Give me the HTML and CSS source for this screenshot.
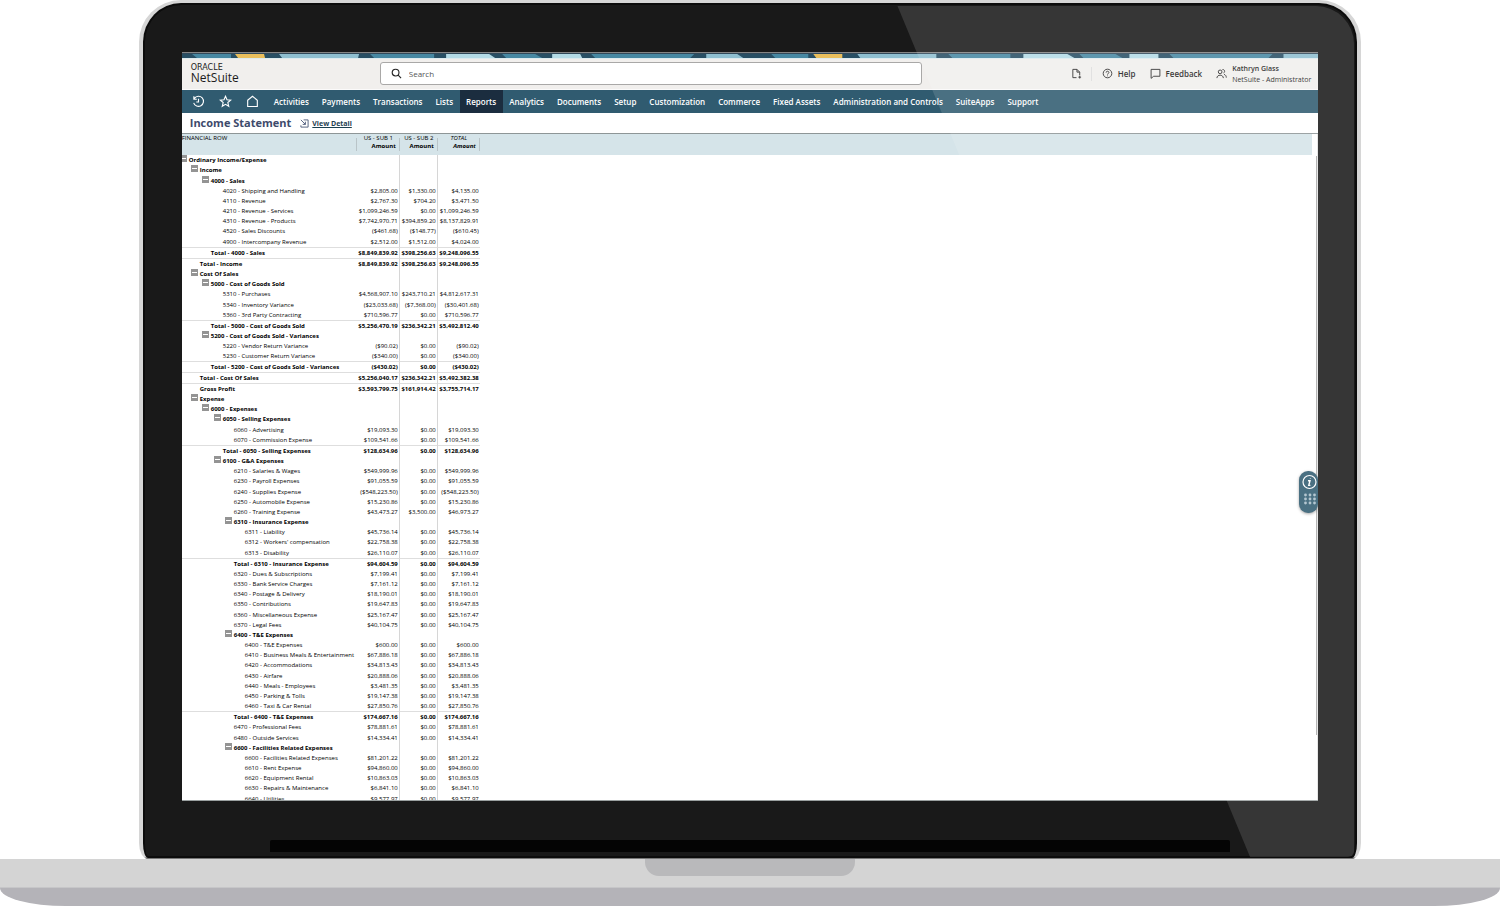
FILE: index.html
```html
<!DOCTYPE html>
<html lang="en">
  <head>
    <meta charset="UTF-8" />
    <meta name="viewport" content="width=device-width, initial-scale=1.0" />
    <title>Income Statement - NetSuite</title>
    <link rel="stylesheet" href="styles.css">
  </head>
  <body>
    <div class="lid">
      <div class="screen">
        <svg class="ribbon" viewBox="0 0 1136 5" preserveAspectRatio="none" aria-hidden="true">
          <rect width="1136" height="5" fill="#284f64" />
          <g fill="#4788a2">
            <path d="M10 0H49V5H15zM188 0H252V5H192zM320 0H353L360 5H324zM409 0H512L508 5H413zM589 0H626V5H593zM766 0H828V5H770zM897 0H933L940 5H901zM987 0H1090L1086 5H991z" />
          </g>
          <path fill="#eabf5c" d="M53 0H82L83 5H56zM631 0H660V5H634z" />
          <path fill="#8fbfd0" d="M97 0H177L176 5H100zM524 0H555L561 5H524zM675 0H754V5H678zM1101 0H1136V5H1101z" />
          <path fill="#b4dbe6" d="M264 0H307L313 5H264zM370 0H398L400 5H370zM841 0H885L892 5H841zM947 0H976V5H947z" />
        </svg>

        <header class="topbar">
          <a href="#" class="logo">
            <span class="logo-oracle">ORACLE</span>
            <span class="logo-netsuite">NetSuite</span>
          </a>
          <label class="search">
            <svg class="icon-search" viewBox="0 0 12 12"><circle cx="5" cy="5" r="3.7" /><path d="M7.8 7.8L11 11" /></svg>
            <input type="text" class="search-input" placeholder="Search" aria-label="Search" />
          </label>
          <div class="tools">
            <button class="tool-button tool-create" aria-label="Create new">
              <svg class="icon" viewBox="0 0 12 12"><path d="M6 10.5H2V1.5H6.5L9.5 4.5V8M6.5 1.5V4.5H9.5M8 10H11M9.5 8.5V11.5" /></svg>
            </button>
            <button class="tool-button tool-help">
              <svg class="icon" viewBox="0 0 12 12"><circle cx="6" cy="6" r="4.7" /><path d="M4.5 5C4.5 3 7.5 3 7.5 5C7.5 6 6 6 6 7.2M6 8.2V9" /></svg>
              Help
            </button>
            <button class="tool-button tool-feedback">
              <svg class="icon" viewBox="0 0 12 12"><path d="M1.2 1.5H10.8V9H4L1.2 11.3z" /></svg>
              Feedback
            </button>
            <button class="tool-button tool-user">
              <svg class="icon" viewBox="0 0 12 12"><circle cx="4.5" cy="4.2" r="2" /><path d="M1 11C1 6.8 8 6.8 8 11M7 1.8C9.6 1.2 10.2 4.6 8.3 5.4M8.8 7C10.4 7.4 11.2 8.6 11.2 10.5" /></svg>
              <span class="user-text">
                <span class="user-name">Kathryn Glass</span>
                <span class="user-role">NetSuite - Administrator</span>
              </span>
            </button>
          </div>
        </header>

        <nav class="menu">
          <div class="menu-icons">
            <a href="#" class="menu-icon" aria-label="Recent">
              <svg viewBox="0 0 14 14"><path d="M2.6 3.6A5.4 5.4 0 1 1 1.8 8.4M2 1.4V4.6H5.2M7 4V7.6H4.6" /></svg>
            </a>
            <a href="#" class="menu-icon" aria-label="Shortcuts">
              <svg viewBox="0 0 14 14"><path d="M7 1.4L8.6 5.2L12.6 5.5L9.5 8.1L10.5 12.2L7 10L3.5 12.2L4.5 8.1L1.4 5.5L5.4 5.2z" /></svg>
            </a>
            <a href="#" class="menu-icon" aria-label="Home">
              <svg viewBox="0 0 14 14"><path d="M1.8 5.6L7 1.4L12.2 5.6V12.4H1.8z" /></svg>
            </a>
          </div>
          <a href="#" class="menu-link">Activities</a>
          <a href="#" class="menu-link">Payments</a>
          <a href="#" class="menu-link">Transactions</a>
          <a href="#" class="menu-link">Lists</a>
          <a href="#" class="menu-link active-link">Reports</a>
          <a href="#" class="menu-link">Analytics</a>
          <a href="#" class="menu-link">Documents</a>
          <a href="#" class="menu-link">Setup</a>
          <a href="#" class="menu-link">Customization</a>
          <a href="#" class="menu-link">Commerce</a>
          <a href="#" class="menu-link">Fixed Assets</a>
          <a href="#" class="menu-link">Administration and Controls</a>
          <a href="#" class="menu-link">SuiteApps</a>
          <a href="#" class="menu-link">Support</a>
        </nav>

        <div class="title-bar">
          <h1 class="title">Income Statement</h1>
          <svg class="icon-detail" viewBox="0 0 10 10"><path d="M4 1H9V9H1V7M1 1L6 6M6 3V6H3" /></svg>
          <a href="#" class="view-detail">View Detail</a>
        </div>

        <main class="report">
          <table class="statement">
            <colgroup>
              <col class="col-name"><col class="col-sub1"><col class="col-sub2"><col class="col-total"><col>
            </colgroup>
            <thead>
              <tr>
                <th class="head-name">FINANCIAL ROW</th>
                <th><span class="head-top">US - SUB 1</span><span class="head-amount">Amount</span></th>
                <th><span class="head-top">US - SUB 2</span><span class="head-amount">Amount</span></th>
                <th class="head-total"><span class="head-top">TOTAL</span><span class="head-amount">Amount</span></th>
                <td class="head-rest"></td>
              </tr>
            </thead>
            <tbody>
              <tr class="group l0"><td><button class="toggle" aria-label="Collapse"></button>Ordinary Income/Expense</td><td></td><td></td><td></td></tr>
              <tr class="group l1"><td><button class="toggle" aria-label="Collapse"></button>Income</td><td></td><td></td><td></td></tr>
              <tr class="group l2"><td><button class="toggle" aria-label="Collapse"></button>4000 - Sales</td><td></td><td></td><td></td></tr>
              <tr class="l3"><td>4020 - Shipping and Handling</td><td>$2,805.00</td><td>$1,330.00</td><td>$4,135.00</td></tr>
              <tr class="l3"><td>4110 - Revenue</td><td>$2,767.30</td><td>$704.20</td><td>$3,471.50</td></tr>
              <tr class="l3"><td>4210 - Revenue - Services</td><td>$1,099,246.59</td><td>$0.00</td><td>$1,099,246.59</td></tr>
              <tr class="l3"><td>4310 - Revenue - Products</td><td>$7,742,970.71</td><td>$394,859.20</td><td>$8,137,829.91</td></tr>
              <tr class="l3"><td>4520 - Sales Discounts</td><td>($461.68)</td><td>($148.77)</td><td>($610.45)</td></tr>
              <tr class="l3"><td>4900 - Intercompany Revenue</td><td>$2,512.00</td><td>$1,512.00</td><td>$4,024.00</td></tr>
              <tr class="total l2"><td>Total - 4000 - Sales</td><td>$8,849,839.92</td><td>$398,256.63</td><td>$9,248,096.55</td></tr>
              <tr class="total l1"><td>Total - Income</td><td>$8,849,839.92</td><td>$398,256.63</td><td>$9,248,096.55</td></tr>
              <tr class="group l1"><td><button class="toggle" aria-label="Collapse"></button>Cost Of Sales</td><td></td><td></td><td></td></tr>
              <tr class="group l2"><td><button class="toggle" aria-label="Collapse"></button>5000 - Cost of Goods Sold</td><td></td><td></td><td></td></tr>
              <tr class="l3"><td>5310 - Purchases</td><td>$4,568,907.10</td><td>$243,710.21</td><td>$4,812,617.31</td></tr>
              <tr class="l3"><td>5340 - Inventory Variance</td><td>($23,033.68)</td><td>($7,368.00)</td><td>($30,401.68)</td></tr>
              <tr class="l3"><td>5360 - 3rd Party Contracting</td><td>$710,596.77</td><td>$0.00</td><td>$710,596.77</td></tr>
              <tr class="total l2"><td>Total - 5000 - Cost of Goods Sold</td><td>$5,256,470.19</td><td>$236,342.21</td><td>$5,492,812.40</td></tr>
              <tr class="group l2"><td><button class="toggle" aria-label="Collapse"></button>5200 - Cost of Goods Sold - Variances</td><td></td><td></td><td></td></tr>
              <tr class="l3"><td>5220 - Vendor Return Variance</td><td>($90.02)</td><td>$0.00</td><td>($90.02)</td></tr>
              <tr class="l3"><td>5230 - Customer Return Variance</td><td>($340.00)</td><td>$0.00</td><td>($340.00)</td></tr>
              <tr class="total l2"><td>Total - 5200 - Cost of Goods Sold - Variances</td><td>($430.02)</td><td>$0.00</td><td>($430.02)</td></tr>
              <tr class="total l1"><td>Total - Cost Of Sales</td><td>$5,256,040.17</td><td>$236,342.21</td><td>$5,492,382.38</td></tr>
              <tr class="total l1"><td>Gross Profit</td><td>$3,593,799.75</td><td>$161,914.42</td><td>$3,755,714.17</td></tr>
              <tr class="group l1"><td><button class="toggle" aria-label="Collapse"></button>Expense</td><td></td><td></td><td></td></tr>
              <tr class="group l2"><td><button class="toggle" aria-label="Collapse"></button>6000 - Expenses</td><td></td><td></td><td></td></tr>
              <tr class="group l3"><td><button class="toggle" aria-label="Collapse"></button>6050 - Selling Expenses</td><td></td><td></td><td></td></tr>
              <tr class="l4"><td>6060 - Advertising</td><td>$19,093.30</td><td>$0.00</td><td>$19,093.30</td></tr>
              <tr class="l4"><td>6070 - Commission Expense</td><td>$109,541.66</td><td>$0.00</td><td>$109,541.66</td></tr>
              <tr class="total l3"><td>Total - 6050 - Selling Expenses</td><td>$128,634.96</td><td>$0.00</td><td>$128,634.96</td></tr>
              <tr class="group l3"><td><button class="toggle" aria-label="Collapse"></button>6100 - G&amp;A Expenses</td><td></td><td></td><td></td></tr>
              <tr class="l4"><td>6210 - Salaries &amp; Wages</td><td>$549,999.96</td><td>$0.00</td><td>$549,999.96</td></tr>
              <tr class="l4"><td>6230 - Payroll Expenses</td><td>$91,055.59</td><td>$0.00</td><td>$91,055.59</td></tr>
              <tr class="l4"><td>6240 - Supplies Expense</td><td>($548,223.50)</td><td>$0.00</td><td>($548,223.50)</td></tr>
              <tr class="l4"><td>6250 - Automobile Expense</td><td>$15,230.86</td><td>$0.00</td><td>$15,230.86</td></tr>
              <tr class="l4"><td>6260 - Training Expense</td><td>$43,473.27</td><td>$3,500.00</td><td>$46,973.27</td></tr>
              <tr class="group l4"><td><button class="toggle" aria-label="Collapse"></button>6310 - Insurance Expense</td><td></td><td></td><td></td></tr>
              <tr class="l5"><td>6311 - Liability</td><td>$45,736.14</td><td>$0.00</td><td>$45,736.14</td></tr>
              <tr class="l5"><td>6312 - Workers' compensation</td><td>$22,758.38</td><td>$0.00</td><td>$22,758.38</td></tr>
              <tr class="l5"><td>6313 - Disability</td><td>$26,110.07</td><td>$0.00</td><td>$26,110.07</td></tr>
              <tr class="total l4"><td>Total - 6310 - Insurance Expense</td><td>$94,604.59</td><td>$0.00</td><td>$94,604.59</td></tr>
              <tr class="l4"><td>6320 - Dues &amp; Subscriptions</td><td>$7,199.41</td><td>$0.00</td><td>$7,199.41</td></tr>
              <tr class="l4"><td>6330 - Bank Service Charges</td><td>$7,161.12</td><td>$0.00</td><td>$7,161.12</td></tr>
              <tr class="l4"><td>6340 - Postage &amp; Delivery</td><td>$18,190.01</td><td>$0.00</td><td>$18,190.01</td></tr>
              <tr class="l4"><td>6350 - Contributions</td><td>$19,647.83</td><td>$0.00</td><td>$19,647.83</td></tr>
              <tr class="l4"><td>6360 - Miscellaneous Expense</td><td>$25,167.47</td><td>$0.00</td><td>$25,167.47</td></tr>
              <tr class="l4"><td>6370 - Legal Fees</td><td>$40,104.75</td><td>$0.00</td><td>$40,104.75</td></tr>
              <tr class="group l4"><td><button class="toggle" aria-label="Collapse"></button>6400 - T&amp;E Expenses</td><td></td><td></td><td></td></tr>
              <tr class="l5"><td>6400 - T&amp;E Expenses</td><td>$600.00</td><td>$0.00</td><td>$600.00</td></tr>
              <tr class="l5"><td>6410 - Business Meals &amp; Entertainment</td><td>$67,886.18</td><td>$0.00</td><td>$67,886.18</td></tr>
              <tr class="l5"><td>6420 - Accommodations</td><td>$34,813.43</td><td>$0.00</td><td>$34,813.43</td></tr>
              <tr class="l5"><td>6430 - Airfare</td><td>$20,888.06</td><td>$0.00</td><td>$20,888.06</td></tr>
              <tr class="l5"><td>6440 - Meals - Employees</td><td>$3,481.35</td><td>$0.00</td><td>$3,481.35</td></tr>
              <tr class="l5"><td>6450 - Parking &amp; Tolls</td><td>$19,147.38</td><td>$0.00</td><td>$19,147.38</td></tr>
              <tr class="l5"><td>6460 - Taxi &amp; Car Rental</td><td>$27,850.76</td><td>$0.00</td><td>$27,850.76</td></tr>
              <tr class="total l4"><td>Total - 6400 - T&amp;E Expenses</td><td>$174,667.16</td><td>$0.00</td><td>$174,667.16</td></tr>
              <tr class="l4"><td>6470 - Professional Fees</td><td>$78,881.61</td><td>$0.00</td><td>$78,881.61</td></tr>
              <tr class="l4"><td>6480 - Outside Services</td><td>$14,334.41</td><td>$0.00</td><td>$14,334.41</td></tr>
              <tr class="group l4"><td><button class="toggle" aria-label="Collapse"></button>6600 - Facilities Related Expenses</td><td></td><td></td><td></td></tr>
              <tr class="l5"><td>6600 - Facilities Related Expenses</td><td>$81,201.22</td><td>$0.00</td><td>$81,201.22</td></tr>
              <tr class="l5"><td>6610 - Rent Expense</td><td>$94,860.00</td><td>$0.00</td><td>$94,860.00</td></tr>
              <tr class="l5"><td>6620 - Equipment Rental</td><td>$10,863.03</td><td>$0.00</td><td>$10,863.03</td></tr>
              <tr class="l5"><td>6630 - Repairs &amp; Maintenance</td><td>$6,841.10</td><td>$0.00</td><td>$6,841.10</td></tr>
              <tr class="l5"><td>6640 - Utilities</td><td>$9,577.97</td><td>$0.00</td><td>$9,577.97</td></tr>
            </tbody>
          </table>
          <div class="scroll-thumb"></div>
        </main>

        <button class="info-tab" aria-label="Information">
          <svg viewBox="0 0 19 42">
            <circle cx="10.5" cy="11" r="6.5" fill="none" stroke="#fff" stroke-width="1.2" />
            <path d="M11.4 7.2V7.8M9 9.8H11L9.8 14.4H11.4" fill="none" stroke="#fff" stroke-width="1.4" />
            <g fill="#a9bfca">
              <circle cx="6.5" cy="24" r="1.4" /><circle cx="11" cy="24" r="1.4" /><circle cx="15.5" cy="24" r="1.4" />
              <circle cx="6.5" cy="28" r="1.4" /><circle cx="11" cy="28" r="1.4" /><circle cx="15.5" cy="28" r="1.4" />
              <circle cx="6.5" cy="32" r="1.4" /><circle cx="11" cy="32" r="1.4" /><circle cx="15.5" cy="32" r="1.4" />
            </g>
          </svg>
        </button>
      </div>
      <div class="hinge"></div>
      <div class="glare"></div>
    </div>
    <div class="base">
      <div class="base-top"><div class="notch"></div></div>
      <div class="base-bottom"></div>
    </div>
  </body>
</html>
```
FILE: styles.css
```css
* {
  box-sizing: border-box;
}

body {
  margin: 0;
  height: 100vh;
  display: flex;
  flex-direction: column;
  overflow: hidden;
  background: #fff;
  font-family: 'Open Sans', 'Noto Sans', sans-serif;
  color: #1b1b1b;
}

button {
  border: none;
  background: none;
  padding: 0;
  font-family: inherit;
  color: inherit;
  cursor: pointer;
}

a {
  color: inherit;
  text-decoration: none;
}

/* laptop lid */
.lid {
  position: relative;
  flex: 1;
  min-height: 0;
  width: 81.5%;
  margin: 0 auto;
  padding: 49px 39px 0;
  display: flex;
  flex-direction: column;
  background: #191919;
  border: 4px solid #d6d6d6;
  border-top-width: 3px;
  border-bottom: 1px solid #777;
  border-radius: 42px 42px 9px 9px / 42px 42px 16px 16px;
  box-shadow: inset 0 0 0 2px #0c0c0c;
}

.glare {
  position: absolute;
  inset: 3px 3px 1px 0;
  border-radius: 0 38px 6px 0;
  background: rgba(255, 255, 255, 0.13);
  clip-path: polygon(62.3% 0, 100% 0, 100% 100%, 91.4% 100%);
  pointer-events: none;
}

.hinge {
  height: 12px;
  margin: 39px 88px 6px;
  background: #040404;
  border-radius: 2px 2px 0 0;
}

.screen {
  position: relative;
  flex: 1;
  min-height: 0;
  display: flex;
  flex-direction: column;
  overflow: hidden;
  background: #fff;
  border-top: 1px solid #858585;
  border-bottom: 1px solid #9aa0a0;
}

.ribbon {
  display: block;
  flex: none;
  width: 100%;
  height: 6px;
  border-top: 1px solid #31495a;
  border-bottom: 1px solid #dcebef;
}

/* header */
.topbar {
  flex: none;
  display: flex;
  align-items: center;
  height: 31px;
  padding: 0 7px 1px 9px;
  background: #f1efed;
  border-bottom: 1px solid #fbfafa;
}

.logo {
  width: 189px;
  display: flex;
  flex-direction: column;
}

.logo-oracle {
  font-family: 'DejaVu Sans', sans-serif;
  font-size: 8px;
  line-height: 9px;
}

.logo-netsuite {
  font-size: 12px;
  line-height: 12px;
}

.search {
  flex: 0 1 542px;
  display: flex;
  align-items: center;
  height: 23px;
  padding: 0 10px;
  gap: 7px;
  background: #fff;
  border: 1px solid #a9a8a7;
  border-radius: 3px;
}

.icon-search {
  width: 11px;
  height: 11px;
  fill: none;
  stroke: #222;
  stroke-width: 1.2;
}

.search-input {
  flex: 1;
  border: none;
  outline: none;
  padding: 0;
  font-family: inherit;
  font-size: 8px;
}

.search-input::placeholder {
  color: #555;
}

.tools {
  display: flex;
  align-items: center;
  margin-left: auto;
}

.tool-button {
  display: flex;
  align-items: center;
  gap: 5px;
  font-size: 8px;
  font-weight: 600;
}

.icon {
  width: 11px;
  height: 11px;
  fill: none;
  stroke: #222;
  stroke-width: 1;
}

.tool-create {
  height: 14px;
  padding-right: 9px;
  border-right: 1px solid #ddd;
}

.tool-help {
  margin-left: 10px;
}

.tool-feedback,
.tool-user {
  margin-left: 14px;
}

.user-text {
  display: flex;
  flex-direction: column;
  text-align: left;
  line-height: 11px;
}

.user-name,
.user-role {
  font-size: 7px;
}

.user-role {
  font-weight: 400;
}

/* navigation */
.menu {
  flex: none;
  display: flex;
  height: 23px;
  padding-left: 10px;
  background: #305b70;
  color: #fff;
}

.menu-icons {
  display: flex;
  gap: 14px;
  margin-right: 9px;
}

.menu-icon {
  display: flex;
  align-items: center;
}

.menu-icon svg {
  width: 13px;
  height: 13px;
  fill: none;
  stroke: #fff;
  stroke-width: 1.2;
}

.menu-link {
  padding: 0 7px 0 6px;
  font-size: 8px;
  font-weight: 600;
  line-height: 23px;
  white-space: nowrap;
}

.active-link {
  background: #1b2d3f;
}

.title-bar {
  flex: none;
  display: flex;
  align-items: center;
  height: 21px;
  padding-left: 8px;
  border-bottom: 1px solid #8e9697;
}

.title {
  margin: 0;
  font-size: 11px;
  line-height: 20px;
  color: #3d4a6b;
}

.icon-detail {
  width: 9px;
  height: 9px;
  margin: 0 3px 0 9px;
  fill: none;
  stroke: #4a5878;
  stroke-width: 1;
}

.view-detail {
  font-size: 7px;
  font-weight: 700;
  color: #1c4050;
  text-decoration: underline;
}

/* report */
.report {
  position: relative;
  flex: 1;
  min-height: 0;
  overflow: hidden;
  padding-right: 5px;
  border-right: 1px solid #e4e4e4;
}

.scroll-thumb {
  position: absolute;
  top: 22px;
  right: 0;
  width: 1px;
  height: 87%;
  background: #aaa;
}

.statement {
  width: 100%;
  table-layout: fixed;
  border-collapse: separate;
  border-spacing: 0;
  font-size: 6px;
  color: #000;
}

.col-name { width: 175px; }
.col-sub1 { width: 43px; }
.col-sub2 { width: 38px; }
.col-total { width: 42px; }

.statement td,
.statement th {
  padding: 0;
  line-height: 8px;
  white-space: nowrap;
}

.statement thead tr {
  height: 21px;
  background: #d5e4e9;
}

.statement th {
  vertical-align: top;
  font-weight: 400;
  background: linear-gradient(#b9c4c8, #b9c4c8) right 4px / 1px 13px no-repeat;
}

.statement .head-name {
  text-align: left;
}

.head-top,
.head-amount {
  display: block;
}

.head-amount {
  padding-right: 4px;
  text-align: right;
  font-weight: 700;
}

.head-total {
  font-style: italic;
}

.statement tbody tr {
  height: 10px;
}

.statement tbody tr.total,
.statement tbody tr:nth-child(6n + 3) {
  height: 11px;
}

.statement tbody td {
  text-align: right;
  padding-right: 1px;
}

.statement tbody td:first-child {
  text-align: left;
}

.statement tbody td:nth-child(2),
.statement tbody td:nth-child(3) {
  border-right: 1px solid #d6d6d6;
}

.group,
.total {
  font-weight: 700;
}

.total td {
  border-top: 1px solid #dedede;
}

.l0 td:first-child { padding-left: 7px; }
.l1 td:first-child { padding-left: 18px; }
.l2 td:first-child { padding-left: 29px; }
.l3 td:first-child { padding-left: 41px; }
.l4 td:first-child { padding-left: 52px; }
.l5 td:first-child { padding-left: 63px; }

.toggle {
  width: 7px;
  height: 7px;
  margin: -1px 2px 0 -9px;
  vertical-align: 0;
  background: linear-gradient(#fff, #fff) center / 5px 1px no-repeat #949494;
}

.info-tab {
  position: absolute;
  top: 56%;
  right: 0;
  width: 19px;
  height: 42px;
  border-radius: 9px;
  background: #305b70;
  box-shadow: 0 1px 3px rgba(0, 0, 0, 0.4);
}

.info-tab svg {
  display: block;
}

/* laptop base */
.base-top {
  height: 29px;
  background: #d4d4d4;
  border-bottom: 1px solid #c6c6c8;
}

.notch {
  width: 14%;
  height: 17px;
  margin: 0 auto;
  background: #b9b9bb;
  border-radius: 0 0 14px 14px;
}

.base-bottom {
  height: 18px;
  background: #b4b3b8;
  border-radius: 0 0 66px 66px / 0 0 18px 18px;
}
```
